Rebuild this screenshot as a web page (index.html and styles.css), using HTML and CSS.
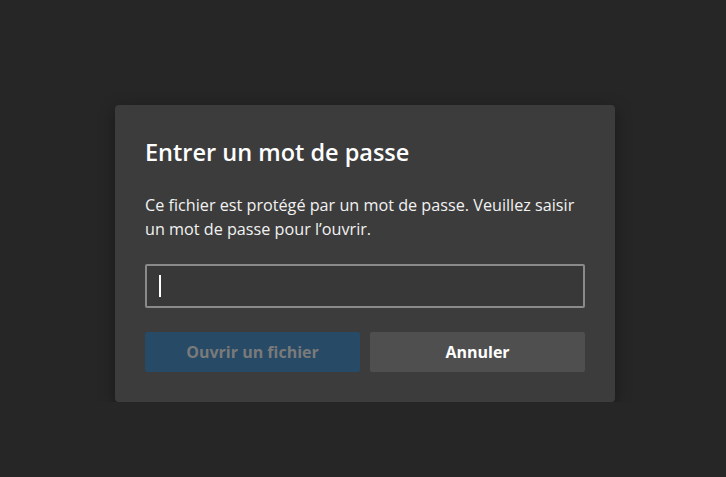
FILE: index.html
```html
<!DOCTYPE html>
<html lang="fr">
<head>
  <meta charset="UTF-8">
  <meta name="viewport" content="width=device-width, initial-scale=1.0">
  <title>Entrer un mot de passe</title>
  <link rel="stylesheet" href="styles.css">
</head>
<body>
  <div class="dialog">
    <h1 class="dialog-title">Entrer un mot de passe</h1>
    <p class="dialog-text">Ce fichier est protégé par un mot de passe. Veuillez saisir un mot de passe pour l’ouvrir.</p>
    <div class="password-box">
      <span class="caret"></span>
    </div>
    <div class="actions">
      <button type="button" class="btn btn-primary" disabled>Ouvrir un fichier</button>
      <button type="button" class="btn btn-cancel">Annuler</button>
    </div>
  </div>
</body>
</html>
```

FILE: styles.css
```css
body {
  margin: 0;
  background: #262626;
  font-family: "Open Sans", "Noto Sans", sans-serif;
  color: #ffffff;
}

.dialog {
  width: 440px;
  margin: 105px 0 0 115px;
  padding: 30px;
  background: #3c3c3c;
  border-radius: 4px;
  box-shadow: 0 4px 16px rgba(0, 0, 0, 0.35);
}

.dialog-title {
  margin: 2px 0 0;
  font-size: 23.5px;
  font-weight: 600;
  line-height: 30px;
}

.dialog-text {
  margin: 26px 0 0;
  font-size: 16.2px;
  line-height: 24px;
  color: #f2f2f2;
}

.password-box {
  margin-top: 23px;
  height: 40px;
  border: 2px solid #8a8a8a;
  border-radius: 2px;
  background: #383838;
  display: flex;
  align-items: center;
  padding-left: 12px;
}

.caret {
  width: 2px;
  height: 22px;
  background: #ffffff;
}

.actions {
  margin-top: 24px;
  display: flex;
  gap: 10px;
}

.btn {
  flex: 1;
  height: 40px;
  border: none;
  border-radius: 2px;
  font-family: inherit;
  font-size: 16px;
  font-weight: 700;
}

.btn-primary {
  background: #274a66;
  color: #7a7a7a;
}

.btn-cancel {
  background: #4f4f4f;
  color: #ffffff;
  cursor: pointer;
}
```
